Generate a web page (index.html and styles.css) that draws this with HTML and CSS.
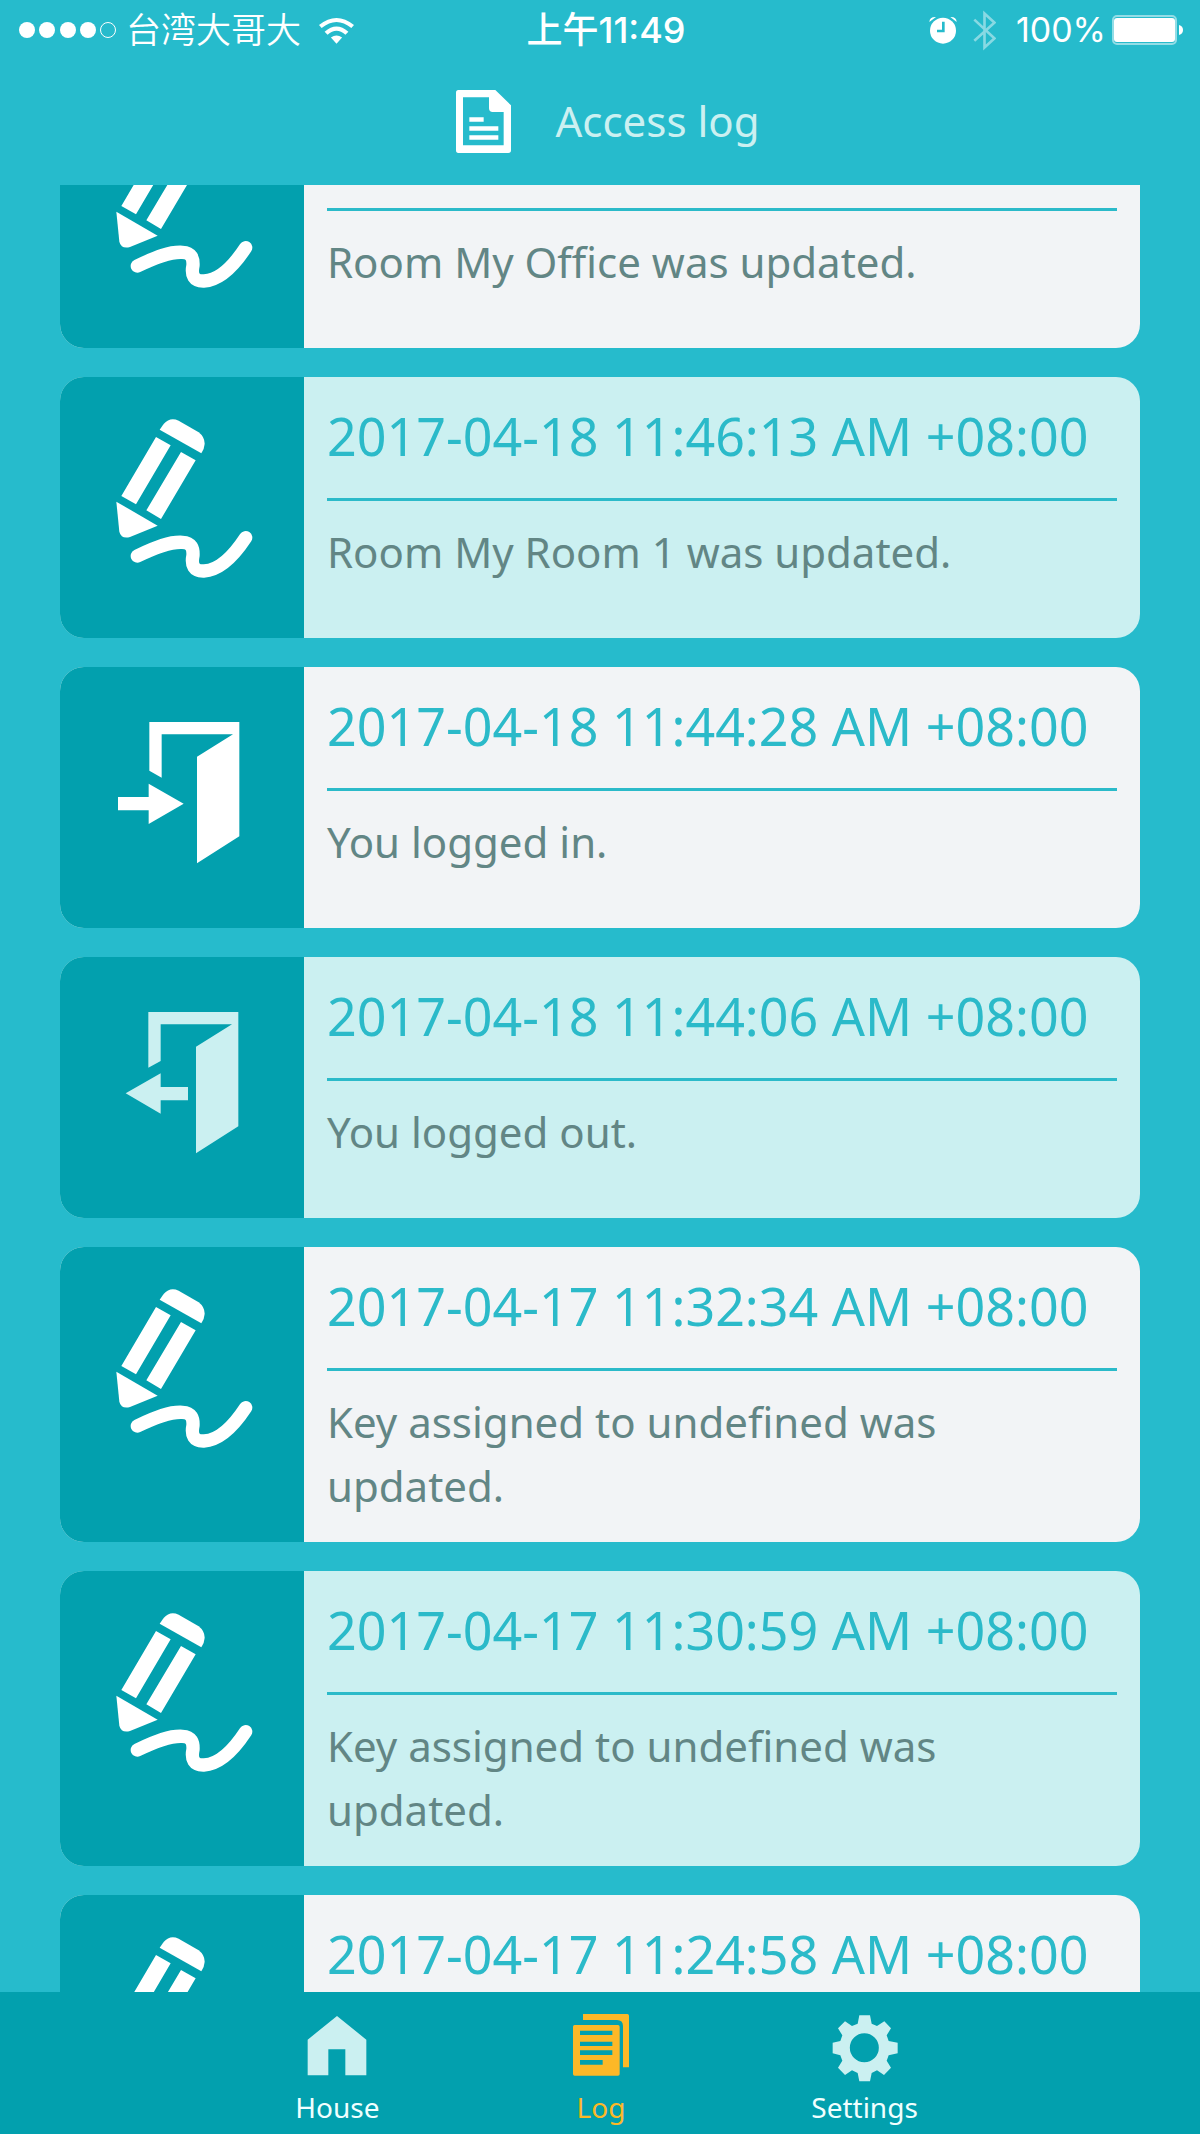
FILE: index.html
```html
<!DOCTYPE html>
<html lang="en">
<head>
<meta charset="utf-8">
<meta name="viewport" content="width=device-width, initial-scale=1">
<title>Access log</title>
<link rel="stylesheet" href="styles.css">
</head>
<body>
<svg class="sprite" aria-hidden="true">
  <symbol id="pencil" viewBox="180 146 432 480">
    <path d="M329 178 341 161Q360 139 386 151L446 186Q464 200 464 220 463 236 454 249Z"/>
    <path d="M318 200 362 225 258 402 214 377ZM393 245 437 270 333 446 289 420Z"/>
    <path d="M199 394 323 466 240 500Q214 507 208 484Z"/>
    <path class="stroke" d="M262 557C320 529 360 514 397 516 425 517 430 535 429 555 423 585 431 603 462 602 502 600 541 572 587 502"/>
  </symbol>
  <symbol id="door-in" viewBox="180 146 432 480">
    <path d="M298 185H568V528L441 609V289L549 222H335V352L298 331ZM204 410H296V370L401 430 296 491V450H204Z"/>
  </symbol>
  <symbol id="door-out" viewBox="180 146 432 480">
    <path d="M295 185H565V528L438 609V289L546 222H332V332L295 352ZM414 410H332V369L227 429 332 490V450H414Z"/>
  </symbol>
</svg>

<div class="app">
  <div class="status">
    <div class="status-left">
      <svg class="signal" viewBox="0 0 98 16" aria-hidden="true">
        <circle cx="8" cy="8" r="8"/><circle cx="28" cy="8" r="8"/><circle cx="49" cy="8" r="8"/><circle cx="69" cy="8" r="8"/><circle class="hollow" cx="89" cy="8" r="7.5"/>
      </svg>
      <span class="carrier" lang="zh">台湾大哥大</span>
      <svg class="wifi" viewBox="957 43 106 81" aria-hidden="true">
        <path d="M957 67Q1010 24 1063 67L1055 76Q1010 39 965 76ZM974 87Q1010 56 1046 87L1037 96Q1010 73 983 96ZM993 105Q1010 92 1027 105L1010 124Z"/>
      </svg>
    </div>
    <time class="clock" lang="zh">上午11:49</time>
    <div class="status-right">
      <svg class="alarm" viewBox="147 46 84 84" aria-hidden="true">
        <circle cx="189" cy="90" r="39"/>
        <path d="M148 64Q149 48 168 49ZM230 64Q229 48 211 49Z"/>
        <path class="hands" d="M190 63V91H171"/>
      </svg>
      <svg class="bluetooth" viewBox="280 28 70 122" aria-hidden="true">
        <path d="M284 56 345 113 315 141V37L345 65 284 120"/>
      </svg>
      <span>100%</span>
      <svg class="battery" viewBox="0 0 71 30" aria-hidden="true">
        <rect class="case" x="1" y="1" width="63" height="28" rx="4"/>
        <rect x="2" y="3" width="61" height="24" rx="3"/>
        <path d="M67 10Q71 11 71 15T67 20Z"/>
      </svg>
    </div>
  </div>

  <header class="title">
    <svg class="title-icon" viewBox="168 271 165 189" aria-hidden="true">
      <path fill-rule="evenodd" d="M175 271H286L333 317V452Q333 460 325 460H175Q168 460 168 452V279Q168 271 175 271ZM189 293V437H311V337H278Q267 337 267 326V293Z"/>
      <path d="M208 353H251V366H208ZM208 380H295V393H208ZM208 407H295V420H208Z"/>
    </svg>
    <h1>Access log</h1>
  </header>

  <main class="viewport">
    <ol class="log">
      <li class="entry">
        <div class="entry-icon"><svg aria-hidden="true"><use href="#pencil"/></svg></div>
        <div class="entry-body"><div class="entry-date"></div><p>Room My Office was updated.</p></div>
      </li>
      <li class="entry">
        <div class="entry-icon"><svg aria-hidden="true"><use href="#pencil"/></svg></div>
        <div class="entry-body"><time class="entry-date">2017-04-18 11:46:13 AM +08:00</time><p>Room My Room 1 was updated.</p></div>
      </li>
      <li class="entry">
        <div class="entry-icon"><svg aria-hidden="true"><use href="#door-in"/></svg></div>
        <div class="entry-body"><time class="entry-date">2017-04-18 11:44:28 AM +08:00</time><p>You logged in.</p></div>
      </li>
      <li class="entry">
        <div class="entry-icon entry-icon-tint"><svg aria-hidden="true"><use href="#door-out"/></svg></div>
        <div class="entry-body"><time class="entry-date">2017-04-18 11:44:06 AM +08:00</time><p>You logged out.</p></div>
      </li>
      <li class="entry">
        <div class="entry-icon"><svg aria-hidden="true"><use href="#pencil"/></svg></div>
        <div class="entry-body"><time class="entry-date">2017-04-17 11:32:34 AM +08:00</time><p>Key assigned to undefined was updated.</p></div>
      </li>
      <li class="entry">
        <div class="entry-icon"><svg aria-hidden="true"><use href="#pencil"/></svg></div>
        <div class="entry-body"><time class="entry-date">2017-04-17 11:30:59 AM +08:00</time><p>Key assigned to undefined was updated.</p></div>
      </li>
      <li class="entry">
        <div class="entry-icon"><svg aria-hidden="true"><use href="#pencil"/></svg></div>
        <div class="entry-body"><time class="entry-date">2017-04-17 11:24:58 AM +08:00</time></div>
      </li>
    </ol>
  </main>

  <nav class="tabs">
    <a class="tab" href="#house">
      <svg viewBox="134 101 198 204" aria-hidden="true"><path d="M233 107 321 178V285H258V207H207V285H145V178Z"/></svg>
      <span>House</span>
    </a>
    <a class="tab tab-active" href="#log" aria-current="page">
      <svg viewBox="924 101 198 204" aria-hidden="true">
        <path fill-rule="evenodd" d="M944 134H1074Q1079 134 1079 139V281Q1079 286 1074 286H944Q939 286 939 281V139Q939 134 944 134ZM960 151V164H1057V151ZM960 184V197H1057V184ZM960 210V224H1057V210ZM960 239V253H1028V239Z"/>
        <path d="M969 101H1102Q1107 101 1107 106V261H1089V137Q1089 119 1071 119H969Z"/>
      </svg>
      <span>Log</span>
    </a>
    <a class="tab" href="#settings">
      <svg viewBox="510 101 198 204" aria-hidden="true">
        <path fill-rule="evenodd" d="M592 105H624L629 130 645 137 667 123 687 144 674 165 680 182 707 187V219L680 225 674 241 687 262 666 284 645 270 629 278 624 303H592L587 278 570 270 549 284 528 262 541 241 535 225 512 219V187L535 182 541 165 528 144 549 123 570 137 587 130ZM607 159A43.500 43.500 0 1 0 607 246 43.500 43.500 0 1 0 607 159Z"/>
      </svg>
      <span>Settings</span>
    </a>
  </nav>
</div>
</body>
</html>
```
FILE: styles.css
```css
* {
  box-sizing: border-box;
}

body {
  margin: 0;
  background: #26bbcc;
  color: #fff;
  font-family: "Noto Sans", "Open Sans", sans-serif;
}

svg {
  display: block;
  flex: none;
  fill: currentColor;
}

.sprite {
  position: absolute;
  width: 0;
  height: 0;
}

.app {
  display: flex;
  flex-direction: column;
  height: 100vh;
}

/* Status bar */
.status {
  display: grid;
  grid-template-columns: 1fr auto 1fr;
  align-items: center;
  height: 60px;
  padding: 0 17px 0 19px;
  font-family: Inter, "Noto Sans CJK SC", sans-serif;
  font-size: 35px;
  line-height: 60px;
}

.status-left,
.status-right {
  display: flex;
  align-items: center;
}

.status-right {
  justify-content: flex-end;
  font-size: 34px;
}

.signal {
  width: 98px;
  height: 16px;
}

.signal .hollow {
  fill: none;
  stroke: currentColor;
}

.carrier {
  margin: 0 18px 0 9px;
  font-weight: 350;
}

.wifi {
  width: 35px;
  height: 27px;
}

.clock {
  padding-left: 10px;
  font-size: 36px;
  font-weight: 500;
}

.alarm {
  width: 28px;
  height: 28px;
  margin-right: 16px;
}

.alarm .hands {
  fill: none;
  stroke: #26bbcc;
  stroke-width: 8px;
}

.bluetooth {
  width: 23px;
  height: 41px;
  margin-right: 20px;
  opacity: 0.45;
}

.bluetooth path {
  fill: none;
  stroke: currentColor;
  stroke-width: 8px;
}

.battery {
  width: 71px;
  height: 30px;
  margin-left: 6px;
}

.battery .case {
  fill: none;
  stroke: currentColor;
  stroke-width: 2px;
  opacity: 0.5;
}

/* Screen title */
.title {
  display: flex;
  align-items: center;
  justify-content: center;
  gap: 44px;
  height: 125px;
  padding: 0 0 3px 16px;
}

.title-icon {
  width: 55px;
  height: 63px;
}

.title h1 {
  margin: 0;
  color: #cbf0f1;
  font-size: 42px;
  font-weight: 400;
  line-height: 64px;
}

/* Log list */
.viewport {
  flex: 1;
  min-height: 0;
  overflow: hidden;
}

.log {
  display: flex;
  flex-direction: column;
  gap: 29px;
  margin: -98px 0 0;
  padding: 0 60px;
  list-style: none;
}

.entry {
  display: flex;
  flex: none;
  min-height: 261px;
  overflow: hidden;
  border-radius: 24px;
  background: #f2f4f6;
}

.entry:nth-child(even) {
  background: #cbf0f1;
}

.entry-icon {
  display: flex;
  flex: none;
  justify-content: center;
  width: 244px;
  padding-top: 42px;
  background: #02a0ae;
}

.entry-icon-tint {
  color: #cbf0f1;
}

.entry-icon svg {
  width: 144px;
  height: 160px;
}

.stroke {
  fill: none;
  stroke: currentColor;
  stroke-width: 40px;
  stroke-linecap: round;
  stroke-linejoin: round;
}

.entry-body {
  flex: 1;
  min-width: 0;
  padding: 0 23px 24px;
}

.entry-date {
  display: block;
  height: 124px;
  border-bottom: 3px solid #2bbac9;
  color: #2bbac9;
  font-size: 52px;
  line-height: 118px;
}

.entry p {
  margin: 19px 0 0;
  color: #628685;
  font-size: 42px;
  line-height: 64px;
}

/* Bottom tabs */
.tabs {
  display: flex;
  justify-content: center;
  height: 142px;
  padding-left: 2px;
  background: #02a0ae;
}

.tab {
  display: flex;
  flex-direction: column;
  align-items: center;
  width: 22%;
  padding-top: 22px;
  color: #cbf0f1;
  font-size: 28px;
  line-height: 50px;
  text-decoration: none;
}

.tab svg {
  width: 66px;
  height: 68px;
}

.tab span {
  color: #f0ffff;
}

.tab-active,
.tab-active span {
  color: #fdb827;
}
```
